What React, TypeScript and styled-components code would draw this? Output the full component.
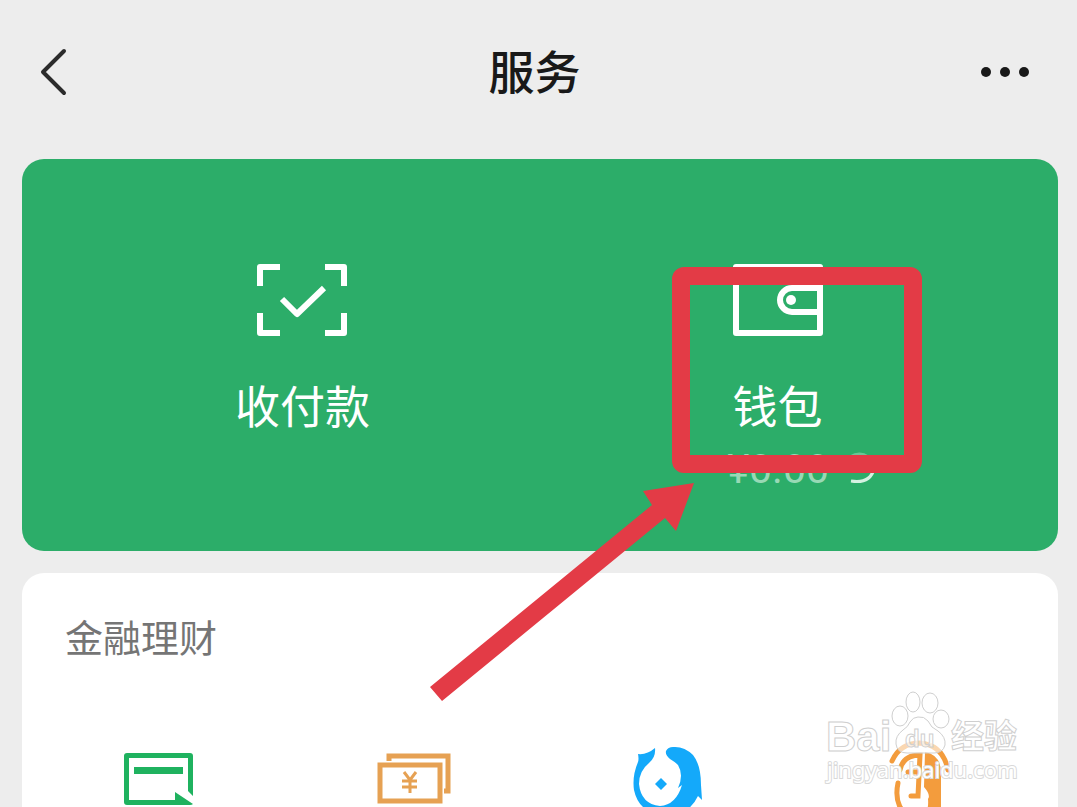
import React from "react";
import styled, { createGlobalStyle } from "styled-components";

const GlobalStyle = createGlobalStyle`
  * { box-sizing: border-box; }
  body {
    margin: 0;
    background: #ededed;
    color: #191919;
    font-family: "Noto Sans CJK SC", sans-serif;
  }
  button {
    padding: 0;
    border: 0;
    background: none;
    color: inherit;
    font: inherit;
    cursor: pointer;
  }
  svg { display: block; overflow: visible; }
`;

const Page = styled.main`
  position: relative;
  display: flex;
  flex-direction: column;
  height: 100vh;
  overflow: hidden;
`;

const Header = styled.header`
  display: grid;
  grid-template-columns: 1fr auto 1fr;
  align-items: center;
  flex: none;
  height: 144px;
  margin-bottom: 15px;
  padding: 0 44px 0 36px;
`;

const HeaderButton = styled.button<{ $end?: boolean }>`
  justify-self: ${(p) => (p.$end ? "end" : "start")};
`;

const Title = styled.h1`
  margin: 0;
  padding-bottom: 6px;
  font-size: 46px;
  line-height: 64px;
  font-weight: 500;
`;

const Cards = styled.div`
  display: flex;
  flex: 1;
  flex-direction: column;
  gap: 22px;
  padding: 0 19px 0 22px;
`;

const PayCard = styled.section`
  display: grid;
  grid-template-columns: 1fr 1fr;
  flex: none;
  height: 392px;
  padding: 104px 43px 0;
  border-radius: 22px;
  background: #2cad69;
  color: #fff;
`;

const PayCell = styled.div`
  position: relative;
  display: flex;
  flex-direction: column;
  align-items: center;
`;

const PayButton = styled.button`
  display: flex;
  flex-direction: column;
  align-items: center;
  gap: 36px;
  font-size: 45px;
  line-height: 64px;
`;

const Balance = styled.p`
  display: flex;
  align-items: center;
  gap: 18px;
  margin: 4px 0 0;
  padding-left: 48px;
  width: 196px;
  color: #98d9b5;
  font-family: Roboto, sans-serif;
  font-size: 41px;
  line-height: 56px;
`;

const Annotation = styled.svg`
  position: absolute;
  top: -3px;
  left: 50%;
  margin-left: -353px;
  z-index: 1;
  pointer-events: none;
`;

const FinanceCard = styled.section`
  flex: 1;
  border-radius: 22px 22px 0 0;
  background: #fff;
`;

const SectionTitle = styled.h2`
  margin: 0;
  padding: 35px 43px 0;
  color: #757575;
  font-size: 38px;
  line-height: 56px;
  font-weight: 400;
`;

const FinanceGrid = styled.div`
  display: grid;
  grid-template-columns: repeat(4, 1fr);
  justify-items: center;
  padding: 81px 10px 0;
`;

const Watermark = styled.svg`
  position: absolute;
  right: 49px;
  bottom: 17px;
  z-index: 2;
  fill: rgba(255, 255, 255, 0.6);
  stroke: #cfcfcf;
  stroke-width: 1px;
  pointer-events: none;
`;

const BrandText = styled.text<{ $size: number }>`
  font-family: "Liberation Sans", "Noto Sans CJK SC", sans-serif;
  font-size: ${(p) => p.$size}px;
  font-weight: 700;
`;

const SiteText = styled.text`
  fill: #fff;
  stroke: #d9d9d9;
  stroke-width: 2px;
  paint-order: stroke;
  font-family: "Noto Sans", sans-serif;
  font-size: 22px;
`;

const ScanIcon = () => (
  <svg width="92" height="74" viewBox="0 0 92 74" fill="none" stroke="#fff" strokeWidth="6" strokeLinejoin="round" aria-hidden="true">
    <path d="M4 23V4H24M69 4H88V23M88 50V70H69M24 70H4V50" />
    <path d="M26 36L41 51L68 25" />
  </svg>
);

const WalletIcon = () => (
  <svg width="92" height="74" viewBox="0 0 92 74" fill="none" stroke="#fff" strokeWidth="6" strokeLinejoin="round" aria-hidden="true">
    <path d="M4 4H88V70H4Z" />
    <path d="M88 25H60A12 12 0 0 0 60 49H88" />
    <circle cx="59" cy="37" r="5" fill="#fff" stroke="none" />
  </svg>
);

const LoadingIcon = () => (
  <svg width="30" height="34" viewBox="0 0 30 34" fill="none" strokeWidth="3" aria-hidden="true">
    <path d="M3 5Q13 -1 21 5Q27 10 27 17" stroke="#6cc595" />
    <path d="M27 17Q23 32 4 29" stroke="#d5f2e1" />
  </svg>
);

const CardIcon = () => (
  <svg width="76" height="72" viewBox="0 0 76 72" fill="#1fb25f" aria-hidden="true">
    <path d="M6 8H69Q72 8 72 11V51L67 46V13H8V55H54V47L72 59Q71 60 69 60H6Q3 60 3 57V11Q3 8 6 8Z" />
    <path d="M13 22H62V29H13Z" />
  </svg>
);

const CashIcon = () => (
  <svg width="76" height="72" viewBox="0 0 76 72" fill="none" stroke="#e6a153" strokeWidth="5" aria-hidden="true">
    <path d="M14 16V11H73V46H69" />
    <path d="M5 20H65V56H5Z" />
    <path d="M29 27L35 35L41 27M35 35V48M27 36H42M27 42H42" strokeWidth="3" />
  </svg>
);

const FishIcon = () => (
  <svg width="76" height="72" viewBox="0 0 76 72" fill="#14a9fa" aria-hidden="true">
    <path d="M9 9Q18 10 26 3Q27 12 20 18Q10 26 10 39Q12 59 31 61Q47 60 53 40L49 43Q55 30 49 20Q46 17 41 14Q36 10 37 6Q39 2 44 2Q55 1 64 10Q72 20 72 40L73 55L69 51Q60 70 38 71Q10 69 5 45Q3 31 9 17Q10 14 9 9Z" />
    <path d="M32 33L38 39L32 45L26 39Z" />
  </svg>
);

const FaceIcon = () => (
  <svg width="76" height="72" viewBox="0 0 76 72" fill="none" stroke="#f39c3d" strokeWidth="5" strokeLinecap="round" aria-hidden="true">
    <path d="M9 16Q17 -2 37 -2Q60 0 65 25" />
    <path d="M17 25Q20 10 37 10L35 51H28M25 27H35" />
    <path d="M15 38Q12 52 17 62L24 72" />
    <path d="M42 7Q58 10 58 28V72H41Q46 64 45 54Q48 50 41 42Z" fill="#f39c3d" stroke="none" />
  </svg>
);

const FINANCE_ITEMS = [
  { label: "信用卡还款", Icon: CardIcon },
  { label: "微粒贷借钱", Icon: CashIcon },
  { label: "理财通", Icon: FishIcon },
  { label: "保险服务", Icon: FaceIcon },
];

export default function App() {
  return (
    <Page>
      <GlobalStyle />
      <Header>
        <HeaderButton aria-label="返回">
          <svg width="34" height="50" viewBox="0 0 34 50" fill="none" stroke="#2b2b2b" strokeWidth="4" strokeLinecap="round" strokeLinejoin="round">
            <path d="M28 4L7 25L28 46" />
          </svg>
        </HeaderButton>
        <Title>服务</Title>
        <HeaderButton $end aria-label="更多">
          <svg width="54" height="14" viewBox="0 0 54 14" fill="#191919">
            <circle cx="7" cy="7" r="5" />
            <circle cx="26" cy="7" r="5" />
            <circle cx="45" cy="7" r="5" />
          </svg>
        </HeaderButton>
      </Header>
      <Cards>
        <PayCard>
          <PayCell>
            <PayButton><ScanIcon />收付款</PayButton>
          </PayCell>
          <PayCell>
            <PayButton><WalletIcon />钱包</PayButton>
            <Balance>¥0.00<LoadingIcon /></Balance>
            <Annotation width="500" height="445" viewBox="0 0 500 445" aria-hidden="true">
              <rect x="256" y="16" width="232" height="188" rx="3" fill="none" stroke="#e33b46" strokeWidth="18" />
              <path d="M269 223L218 231L227 245L5 427L17 441L240 258L251 271Z" fill="#e33b46" />
            </Annotation>
          </PayCell>
        </PayCard>
        <FinanceCard>
          <SectionTitle>金融理财</SectionTitle>
          <FinanceGrid>
            {FINANCE_ITEMS.map(({ label, Icon }) => (
              <button key={label} aria-label={label}><Icon /></button>
            ))}
          </FinanceGrid>
        </FinanceCard>
      </Cards>
      <Watermark width="204" height="102" viewBox="0 0 204 102">
        <ellipse cx="76" cy="28" rx="8" ry="10" />
        <ellipse cx="89" cy="14" rx="7" ry="10" />
        <ellipse cx="106" cy="15" rx="8" ry="10" />
        <ellipse cx="117" cy="31" rx="8" ry="9" />
        <path d="M94 29Q100 28 104 33Q107 40 114 43Q122 49 121 57Q119 65 110 65H83Q73 65 72 56Q71 48 79 42Q84 39 86 34Q89 29 94 29Z" />
        <BrandText x="2" y="63" $size={42}>Bai</BrandText>
        <BrandText x="81" y="59" $size={24}>du</BrandText>
        <BrandText x="127" y="60" $size={33}>经验</BrandText>
        <SiteText x="3" y="90">jingyan.baidu.com</SiteText>
      </Watermark>
    </Page>
  );
}
